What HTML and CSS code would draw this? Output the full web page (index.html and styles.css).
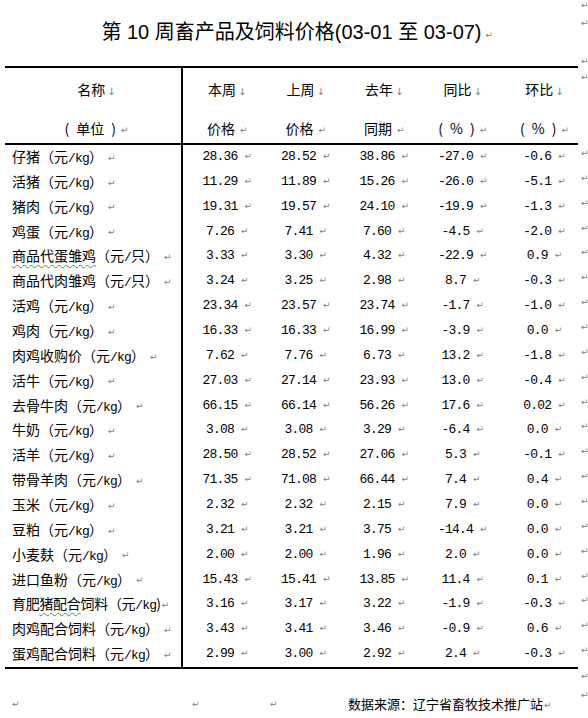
FILE: index.html
```html
<!DOCTYPE html>
<html lang="zh-CN">
<head>
<meta charset="utf-8">
<title>第10周畜产品及饲料价格</title>
<link rel="stylesheet" href="styles.css">
</head>
<body>
<div class="top">
  <div class="top-main">
    <h1 class="title">第 10 周畜产品及饲料价格(03-01 至 03-07)<span class="pm0"><span class="pm">↵</span></span></h1>
  </div>
  <div class="gut gut-top">
    <span class="gm g1">↵</span>
    <span class="gm g2">↵</span>
    <span class="gm g3">↵</span>
  </div>
</div>

<div class="tsec">
  <div class="tbl">
    <div class="thead">
      <div class="hn"><div>名称<span class="br">↓</span></div><div><span class="par">(</span>单位<span class="par r">)</span><span class="pm">↵</span></div></div>
      <div class="h"><div>本周<span class="br">↓</span></div><div>价格<span class="pm">↵</span></div></div>
      <div class="h"><div>上周<span class="br">↓</span></div><div>价格<span class="pm">↵</span></div></div>
      <div class="h"><div>去年<span class="br">↓</span></div><div>同期<span class="pm">↵</span></div></div>
      <div class="h"><div>同比<span class="br">↓</span></div><div><span class="par">(</span>%<span class="par r">)</span><span class="pm">↵</span></div></div>
      <div class="h last"><div>环比<span class="br">↓</span></div><div><span class="par">(</span>%<span class="par r">)</span><span class="pm">↵</span></div></div>
    </div>
    <div class="trow"><div class="n">仔猪（元<span class="lat">/kg</span>）<span class="pm">↵</span></div><div class="v">28.36<span class="pm">↵</span></div><div class="v">28.52<span class="pm">↵</span></div><div class="v">38.86<span class="pm">↵</span></div><div class="v">-27.0<span class="pm">↵</span></div><div class="v last">-0.6<span class="pm">↵</span></div></div>
    <div class="trow"><div class="n">活猪（元<span class="lat">/kg</span>）<span class="pm">↵</span></div><div class="v">11.29<span class="pm">↵</span></div><div class="v">11.89<span class="pm">↵</span></div><div class="v">15.26<span class="pm">↵</span></div><div class="v">-26.0<span class="pm">↵</span></div><div class="v last">-5.1<span class="pm">↵</span></div></div>
    <div class="trow"><div class="n">猪肉（元<span class="lat">/kg</span>）<span class="pm">↵</span></div><div class="v">19.31<span class="pm">↵</span></div><div class="v">19.57<span class="pm">↵</span></div><div class="v">24.10<span class="pm">↵</span></div><div class="v">-19.9<span class="pm">↵</span></div><div class="v last">-1.3<span class="pm">↵</span></div></div>
    <div class="trow"><div class="n">鸡蛋（元<span class="lat">/kg</span>）<span class="pm">↵</span></div><div class="v">7.26<span class="pm">↵</span></div><div class="v">7.41<span class="pm">↵</span></div><div class="v">7.60<span class="pm">↵</span></div><div class="v">-4.5<span class="pm">↵</span></div><div class="v last">-2.0<span class="pm">↵</span></div></div>
    <div class="trow"><div class="n"><span class="wavy">商品代蛋雏鸡</span>（元<span class="lat">/</span>只）<span class="pm">↵</span></div><div class="v">3.33<span class="pm">↵</span></div><div class="v">3.30<span class="pm">↵</span></div><div class="v">4.32<span class="pm">↵</span></div><div class="v">-22.9<span class="pm">↵</span></div><div class="v last">0.9<span class="pm">↵</span></div></div>
    <div class="trow"><div class="n">商品代肉雏鸡（元<span class="lat">/</span>只）<span class="pm">↵</span></div><div class="v">3.24<span class="pm">↵</span></div><div class="v">3.25<span class="pm">↵</span></div><div class="v">2.98<span class="pm">↵</span></div><div class="v">8.7<span class="pm">↵</span></div><div class="v last">-0.3<span class="pm">↵</span></div></div>
    <div class="trow"><div class="n">活鸡（元<span class="lat">/kg</span>）<span class="pm">↵</span></div><div class="v">23.34<span class="pm">↵</span></div><div class="v">23.57<span class="pm">↵</span></div><div class="v">23.74<span class="pm">↵</span></div><div class="v">-1.7<span class="pm">↵</span></div><div class="v last">-1.0<span class="pm">↵</span></div></div>
    <div class="trow"><div class="n">鸡肉（元<span class="lat">/kg</span>）<span class="pm">↵</span></div><div class="v">16.33<span class="pm">↵</span></div><div class="v">16.33<span class="pm">↵</span></div><div class="v">16.99<span class="pm">↵</span></div><div class="v">-3.9<span class="pm">↵</span></div><div class="v last">0.0<span class="pm">↵</span></div></div>
    <div class="trow"><div class="n">肉鸡收购价（元<span class="lat">/kg</span>）<span class="pm">↵</span></div><div class="v">7.62<span class="pm">↵</span></div><div class="v">7.76<span class="pm">↵</span></div><div class="v">6.73<span class="pm">↵</span></div><div class="v">13.2<span class="pm">↵</span></div><div class="v last">-1.8<span class="pm">↵</span></div></div>
    <div class="trow"><div class="n">活牛（元<span class="lat">/kg</span>）<span class="pm">↵</span></div><div class="v">27.03<span class="pm">↵</span></div><div class="v">27.14<span class="pm">↵</span></div><div class="v">23.93<span class="pm">↵</span></div><div class="v">13.0<span class="pm">↵</span></div><div class="v last">-0.4<span class="pm">↵</span></div></div>
    <div class="trow"><div class="n">去骨牛肉（元<span class="lat">/kg</span>）<span class="pm">↵</span></div><div class="v">66.15<span class="pm">↵</span></div><div class="v">66.14<span class="pm">↵</span></div><div class="v">56.26<span class="pm">↵</span></div><div class="v">17.6<span class="pm">↵</span></div><div class="v last">0.02<span class="pm tight">↵</span></div></div>
    <div class="trow"><div class="n">牛奶（元<span class="lat">/kg</span>）<span class="pm">↵</span></div><div class="v">3.08<span class="pm">↵</span></div><div class="v">3.08<span class="pm">↵</span></div><div class="v">3.29<span class="pm">↵</span></div><div class="v">-6.4<span class="pm">↵</span></div><div class="v last">0.0<span class="pm">↵</span></div></div>
    <div class="trow"><div class="n">活羊（元<span class="lat">/kg</span>）<span class="pm">↵</span></div><div class="v">28.50<span class="pm">↵</span></div><div class="v">28.52<span class="pm">↵</span></div><div class="v">27.06<span class="pm">↵</span></div><div class="v">5.3<span class="pm">↵</span></div><div class="v last">-0.1<span class="pm">↵</span></div></div>
    <div class="trow"><div class="n">带骨羊肉（元<span class="lat">/kg</span>）<span class="pm">↵</span></div><div class="v">71.35<span class="pm">↵</span></div><div class="v">71.08<span class="pm">↵</span></div><div class="v">66.44<span class="pm">↵</span></div><div class="v">7.4<span class="pm">↵</span></div><div class="v last">0.4<span class="pm">↵</span></div></div>
    <div class="trow"><div class="n">玉米（元<span class="lat">/kg</span>）<span class="pm">↵</span></div><div class="v">2.32<span class="pm">↵</span></div><div class="v">2.32<span class="pm">↵</span></div><div class="v">2.15<span class="pm">↵</span></div><div class="v">7.9<span class="pm">↵</span></div><div class="v last">0.0<span class="pm">↵</span></div></div>
    <div class="trow"><div class="n">豆粕（元<span class="lat">/kg</span>）<span class="pm">↵</span></div><div class="v">3.21<span class="pm">↵</span></div><div class="v">3.21<span class="pm">↵</span></div><div class="v">3.75<span class="pm">↵</span></div><div class="v">-14.4<span class="pm">↵</span></div><div class="v last">0.0<span class="pm">↵</span></div></div>
    <div class="trow"><div class="n">小麦麸（元<span class="lat">/kg</span>）<span class="pm">↵</span></div><div class="v">2.00<span class="pm">↵</span></div><div class="v">2.00<span class="pm">↵</span></div><div class="v">1.96<span class="pm">↵</span></div><div class="v">2.0<span class="pm">↵</span></div><div class="v last">0.0<span class="pm">↵</span></div></div>
    <div class="trow"><div class="n">进口鱼粉（元<span class="lat">/kg</span>）<span class="pm">↵</span></div><div class="v">15.43<span class="pm">↵</span></div><div class="v">15.41<span class="pm">↵</span></div><div class="v">13.85<span class="pm">↵</span></div><div class="v">11.4<span class="pm">↵</span></div><div class="v last">0.1<span class="pm">↵</span></div></div>
    <div class="trow"><div class="n squeeze">育肥<span class="wavy">猪配合</span>饲料（元<span class="lat">/kg</span>)<span class="pm tight">↵</span></div><div class="v">3.16<span class="pm">↵</span></div><div class="v">3.17<span class="pm">↵</span></div><div class="v">3.22<span class="pm">↵</span></div><div class="v">-1.9<span class="pm">↵</span></div><div class="v last">-0.3<span class="pm">↵</span></div></div>
    <div class="trow"><div class="n">肉鸡配合饲料（元<span class="lat">/kg</span>）<span class="pm">↵</span></div><div class="v">3.43<span class="pm">↵</span></div><div class="v">3.41<span class="pm">↵</span></div><div class="v">3.46<span class="pm">↵</span></div><div class="v">-0.9<span class="pm">↵</span></div><div class="v last">0.6<span class="pm">↵</span></div></div>
    <div class="trow"><div class="n">蛋鸡配合饲料（元<span class="lat">/kg</span>）<span class="pm">↵</span></div><div class="v">2.99<span class="pm">↵</span></div><div class="v">3.00<span class="pm">↵</span></div><div class="v">2.92<span class="pm">↵</span></div><div class="v">2.4<span class="pm">↵</span></div><div class="v last">-0.3<span class="pm">↵</span></div></div>
  </div>
  <div class="gut gut-tbl">
    <span class="gm gh">↵</span>
    <span class="gr">↵</span><span class="gr">↵</span><span class="gr">↵</span><span class="gr">↵</span><span class="gr">↵</span><span class="gr">↵</span><span class="gr">↵</span>
    <span class="gr">↵</span><span class="gr">↵</span><span class="gr">↵</span><span class="gr">↵</span><span class="gr">↵</span><span class="gr">↵</span><span class="gr">↵</span>
    <span class="gr">↵</span><span class="gr">↵</span><span class="gr">↵</span><span class="gr">↵</span><span class="gr">↵</span><span class="gr">↵</span><span class="gr">↵</span>
  </div>
</div>

<div class="after">
  <div class="foot">
    <span class="pm">↵</span>
    <span class="pm">↵</span>
    <span class="pm">↵</span>
    <span class="src">数据来源：辽宁省畜牧技术推广站<span class="pm">↵</span></span>
  </div>
  <div class="gut gut-after">
    <span class="gm a1">↵</span>
    <span class="gm a2">↵</span>
  </div>
</div>
</body>
</html>
```
FILE: styles.css
```css
* { box-sizing: border-box; margin: 0; padding: 0; }

body {
  width: 588px;
  height: 718px;
  overflow: hidden;
  background: #ffffff;
  color: #000000;
  font-family: "Noto Sans CJK SC", sans-serif;
}

/* paragraph / line-break marks */
.pm, .br, .gm, .gr {
  font-family: "DejaVu Sans", sans-serif;
  font-size: 9px;
  color: #808080;
  font-weight: normal;
  letter-spacing: 0;
}
.pm { margin-left: 5px; vertical-align: 0.15em; }
.pm.tight { margin-left: 1px; }
.br { margin-left: 2px; font-size: 10px; }
.pm0 { display: inline-block; width: 0; white-space: nowrap; }
.pm0 .pm { margin-left: 4px; }

/* top */
.top { display: flex; height: 66px; }
.top-main {
  width: 578px;
  padding-left: 5px;
  display: flex;
  justify-content: center;
  padding-top: 19px;
}
.title {
  font-family: "Liberation Sans", "Noto Sans CJK SC", sans-serif;
  font-size: 20px;
  font-weight: normal;
  line-height: 26px;
  white-space: nowrap;
}

.gut { width: 10px; display: flex; flex-direction: column; padding-left: 3px; }
.gm { display: block; height: 10px; line-height: 10px; }
.g1 { margin-top: 0; }
.g2 { margin-top: 8px; }
.g3 { margin-top: 28px; }

/* table */
.tsec { display: flex; }
.tbl {
  width: 573px;
  margin-left: 5px;
  border-top: 2px solid #000;
  border-bottom: 2px solid #000;
}
.thead, .trow {
  display: grid;
  grid-template-columns: 178px 78.5px 78.5px 78.5px 78.5px 1fr;
}
.thead {
  height: 77px;
  border-bottom: 2px solid #000;
  font-size: 14px;
  line-height: 36px;
}
.hn, .h {
  padding-top: 3px;
  text-align: center;
  white-space: nowrap;
}
.hn { border-right: 2px solid #000; padding-left: 7px; }
.h { padding-left: 10px; }
.h.last { padding-left: 14px; }
.par { display: inline-block; margin-right: 7px; }
.par.r { margin-right: 0; margin-left: 7px; }

.trow { height: 24.86px; }
.n {
  border-right: 2px solid #000;
  padding-left: 7px;
  white-space: nowrap;
  font-size: 14px;
  line-height: 23px;
}
.n.squeeze { letter-spacing: -0.3px; }
.lat {
  font-family: "Liberation Mono", monospace;
  font-size: 13px;
  letter-spacing: -0.8px;
}
.wavy {
  text-decoration: underline wavy #3a9a3a;
  text-decoration-thickness: 1px;
  text-underline-offset: 3px;
}
.v {
  text-align: center;
  padding-left: 10px;
  line-height: 23px;
  font-family: "Liberation Mono", monospace;
  font-size: 13px;
  letter-spacing: -0.8px;
  white-space: nowrap;
}
.v.last { padding-left: 14px; }
.v .pm { margin-left: 7px; }

.gut-tbl { padding-top: 2px; }
.gh { margin-top: 4px; margin-bottom: 61px; }
.gr { display: block; height: 24.86px; line-height: 20px; }

/* after table */
.after { display: flex; }
.foot {
  width: 578px;
  padding-top: 26px;
  padding-left: 12px;
  display: grid;
  grid-template-columns: 180px 78px 78px auto;
  align-items: center;
  line-height: 18px;
}
.foot > .pm { margin-left: 0; }
.src { font-size: 13px; white-space: nowrap; }
.src .pm { margin-left: 1px; }
.gut-after { padding-top: 0; }
.a1 { margin-top: 2px; }
.a2 { margin-top: 9px; }
```
